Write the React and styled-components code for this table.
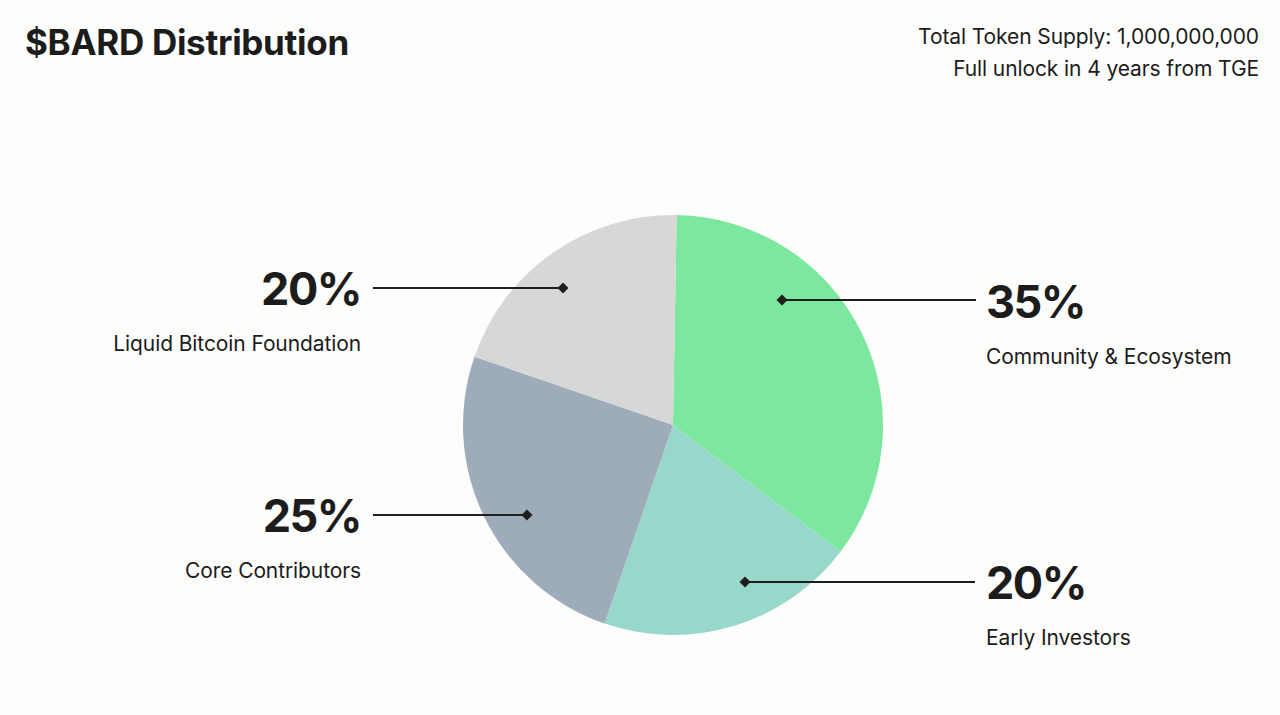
import React from 'react';
import styled, { createGlobalStyle } from 'styled-components';

const GlobalStyle = createGlobalStyle`
  * { box-sizing: border-box; }
  html, body { margin: 0; padding: 0; background: #fdfdfb; }
  body {
    font-family: 'Inter', 'Noto Sans', sans-serif;
    color: #1c1c1c;
    -webkit-font-smoothing: antialiased;
  }
`;

// slice data, order is clockwise from 12 o'clock
const SLICES = [
  { value: 35, color: '#7be79f' },
  { value: 20, color: '#98d8ca' },
  { value: 25, color: '#9eabbb' },
  { value: 20, color: '#d7d7d5' },
];

const LEFT_LABELS = [
  { pct: '20%', name: 'Liquid Bitcoin Foundation' },
  { pct: '25%', name: 'Core Contributors' },
];

const RIGHT_LABELS = [
  { pct: '35%', name: 'Community & Ecosystem' },
  { pct: '20%', name: 'Early Investors' },
];

// leader lines, in chart coords: [from x, to x (diamond), y]
const LEADERS = [
  { x1: 11, x2: 201, y: 88 },
  { x1: 11, x2: 165, y: 315 },
  { x1: 614, x2: 420, y: 100 },
  { x1: 613, x2: 383, y: 382 },
];

const CX = 311;
const CY = 225;
const R = 210;
const OFFSET = 1; // degrees

const point = deg => {
  const rad = ((deg + OFFSET) * Math.PI) / 180;
  return [CX + R * Math.sin(rad), CY - R * Math.cos(rad)];
};

const slicePath = (start, end) => {
  const [x1, y1] = point(start);
  const [x2, y2] = point(end);
  const large = end - start > 180 ? 1 : 0;
  return `M ${CX} ${CY} L ${x1} ${y1} A ${R} ${R} 0 ${large} 1 ${x2} ${y2} Z`;
};

const PieChart = () => {
  let acc = 0;
  return (
    <ChartSvg width="624" height="450" viewBox="0 0 624 450">
      {SLICES.map((s, i) => {
        const start = (acc / 100) * 360;
        acc += s.value;
        const end = (acc / 100) * 360;
        return <path key={i} d={slicePath(start, end)} fill={s.color} />;
      })}
      {LEADERS.map((l, i) => (
        <g key={i}>
          <line x1={l.x1} y1={l.y} x2={l.x2} y2={l.y} stroke="#1e1e1e" strokeWidth="2" />
          <polygon
            points={`${l.x2 - 5.5},${l.y} ${l.x2},${l.y - 5.5} ${l.x2 + 5.5},${l.y} ${l.x2},${l.y + 5.5}`}
            fill="#1e1e1e"
          />
        </g>
      ))}
    </ChartSvg>
  );
};

const App = () => {
  return (
    <>
      <GlobalStyle />
      <Page>
        <Header>
          <Title>$BARD Distribution</Title>
          <SupplyInfo>
            <div>Total Token Supply: 1,000,000,000</div>
            <div>Full unlock in 4 years from TGE</div>
          </SupplyInfo>
        </Header>
        <Body>
          <LabelColumn $side="left">
            {LEFT_LABELS.map((l, i) => (
              <LabelGroup key={i} $gap={i === 0 ? 66 : 137}>
                <Percent>{l.pct}</Percent>
                <LabelName>{l.name}</LabelName>
              </LabelGroup>
            ))}
          </LabelColumn>
          <PieChart />
          <LabelColumn $side="right">
            {RIGHT_LABELS.map((l, i) => (
              <LabelGroup key={i} $gap={i === 0 ? 79 : 191}>
                <Percent>{l.pct}</Percent>
                <LabelName>{l.name}</LabelName>
              </LabelGroup>
            ))}
          </LabelColumn>
        </Body>
      </Page>
    </>
  );
};

export default App;

const Page = styled.div`
  width: 1280px;
  height: 715px;
  overflow: hidden;
  display: flex;
  flex-direction: column;
`;

const Header = styled.header`
  display: flex;
  justify-content: space-between;
  align-items: flex-start;
  padding: 21px 21px 0 25px;
  height: 85px;
`;

const Title = styled.h1`
  margin: 1px 0 0;
  font-size: 35px;
  line-height: 40px;
  font-weight: 700;
  letter-spacing: -0.3px;
`;

const SupplyInfo = styled.div`
  text-align: right;
  font-size: 21px;
  line-height: 32px;
  font-weight: 400;
  letter-spacing: -0.1px;
`;

const Body = styled.main`
  margin-top: 115px;
  display: grid;
  grid-template-columns: 362px 624px 1fr;
  align-items: start;
`;

const ChartSvg = styled.svg`
  display: block;
`;

const LabelColumn = styled.div`
  display: flex;
  flex-direction: column;
  align-items: ${p => (p.$side === 'left' ? 'flex-end' : 'flex-start')};
  text-align: ${p => (p.$side === 'left' ? 'right' : 'left')};
  padding-right: ${p => (p.$side === 'left' ? '1px' : '0')};
`;

const LabelGroup = styled.div`
  display: flex;
  flex-direction: column;
  align-items: inherit;
  margin-top: ${p => p.$gap}px;
`;

const Percent = styled.div`
  font-size: 45px;
  line-height: 46px;
  font-weight: 700;
  letter-spacing: -1.5px;
`;

const LabelName = styled.div`
  margin-top: 20px;
  font-size: 21px;
  line-height: 24px;
  font-weight: 400;
  letter-spacing: -0.1px;
`;
